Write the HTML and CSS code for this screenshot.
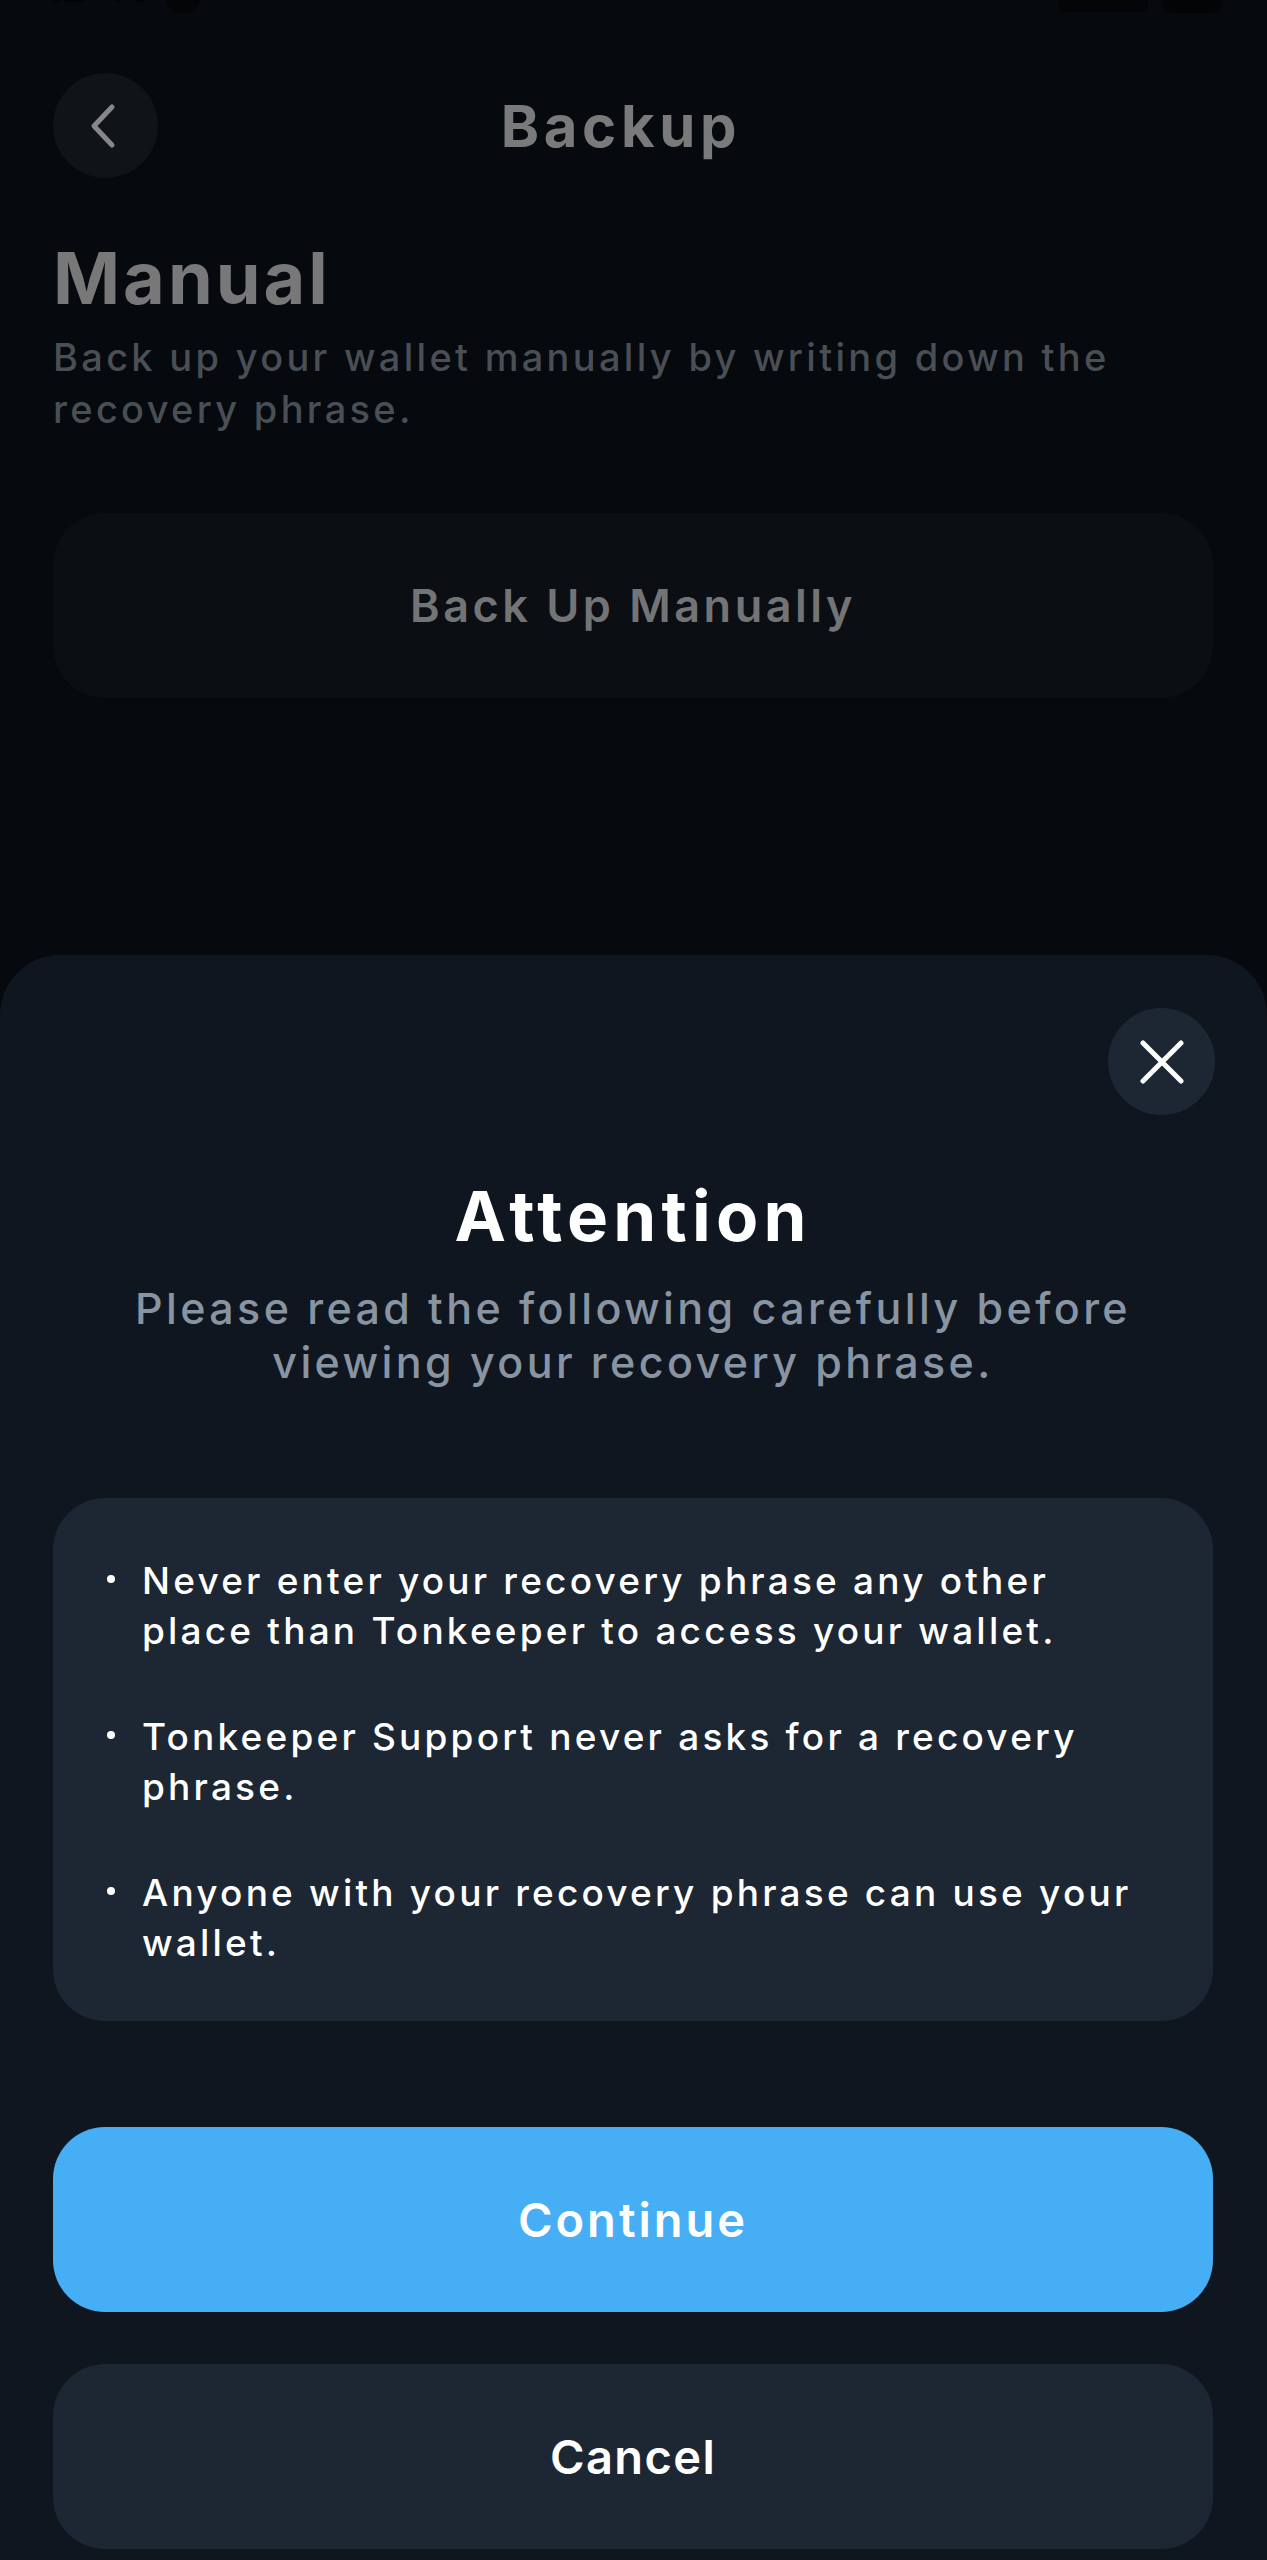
FILE: index.html
```html
<!DOCTYPE html>
<html lang="en">
<head>
<meta charset="utf-8">
<title>Backup</title>
<link rel="stylesheet" href="styles.css">
</head>
<body>
<div class="screen">
  <div class="status">
    <div class="status-left"><span class="time">12:46</span><span class="status-dot"></span></div>
    <div class="status-right"><span class="sig"></span><span class="bat"></span></div>
  </div>

  <div class="page">
    <div class="header">
      <div class="round-btn back">
        <svg width="30" height="48" viewBox="0 0 30 48" fill="none"><path d="M24 5 L6 24 L24 43" stroke="#85878a" stroke-width="5" stroke-linecap="round" stroke-linejoin="round"/></svg>
      </div>
      <div class="header-title">Backup</div>
      <div class="header-spacer"></div>
    </div>

    <h1 class="section-title">Manual</h1>
    <p class="section-desc">Back up your wallet manually by writing down the<br>recovery phrase.</p>

    <div class="btn btn-dim">Back Up Manually</div>
  </div>

  <div class="sheet">
    <div class="sheet-top">
      <div class="round-btn close">
        <svg width="44" height="44" viewBox="0 0 44 44" fill="none"><path d="M3 3 L41 41 M41 3 L3 41" stroke="#ffffff" stroke-width="5" stroke-linecap="round"/></svg>
      </div>
    </div>
    <h2 class="sheet-title">Attention</h2>
    <p class="sheet-sub">Please read the following carefully before<br>viewing your recovery phrase.</p>

    <ul class="notes">
      <li>Never enter your recovery phrase any other<br>place than Tonkeeper to access your wallet.</li>
      <li>Tonkeeper Support never asks for a recovery<br>phrase.</li>
      <li>Anyone with your recovery phrase can use your<br>wallet.</li>
    </ul>

    <div class="btn btn-primary">Continue</div>
    <div class="btn btn-secondary">Cancel</div>
  </div>
</div>
</body>
</html>
```

FILE: styles.css
```css
* { box-sizing: border-box; }
html, body { margin: 0; padding: 0; }
body {
  background: #06090d;
  font-family: Inter, "Noto Sans", "DejaVu Sans", sans-serif;
  width: 1267px;
  height: 2560px;
  overflow: hidden;
}
.screen { display: flex; flex-direction: column; height: 2560px; }

/* status bar (cut off at the top) */
.status {
  height: 16px;
  overflow: hidden;
  display: flex;
  justify-content: space-between;
  align-items: flex-end;
  padding: 0 45px 0 45px;
}
.status-left, .status-right { display: flex; align-items: flex-end; gap: 14px; }
.time { font-size: 40px; line-height: 40px; font-weight: 600; color: #030405; margin-bottom: 8px; }
.status-dot { width: 34px; height: 30px; border-radius: 50%; background: #040506; margin-bottom: 2px; }
.sig { width: 90px; height: 30px; background: #040506; border-radius: 6px; margin-bottom: 4px; }
.bat { width: 60px; height: 30px; background: #030405; border-radius: 10px; margin-bottom: 3px; }

.page { padding: 0 54px 0 53px; }

.header {
  margin-top: 57px;
  height: 105px;
  display: grid;
  grid-template-columns: 105px 1fr 105px;
  align-items: center;
}
.round-btn {
  width: 105px; height: 105px; border-radius: 50%;
  display: flex; align-items: center; justify-content: center;
}
.back { background: #101317; }
.back svg { margin-left: -6px; }
.header-title {
  text-align: center;
  font-size: 58px; line-height: 70px; font-weight: 700;
  letter-spacing: 4.7px;
  color: #7a7a7b;
  padding-right: 24px;
}

.section-title {
  margin: 56px 0 0;
  font-size: 72px; line-height: 88px; font-weight: 700;
  letter-spacing: 3px;
  color: #787879;
}
.section-desc {
  margin: 9px 0 0;
  font-size: 38px; line-height: 52px; font-weight: 500;
  letter-spacing: 3.3px;
  color: #4a4f56;
}

.btn {
  height: 185px; border-radius: 52px;
  display: flex; align-items: center; justify-content: center;
  font-size: 45px; font-weight: 600; letter-spacing: 3px;
}
.btn-dim { margin-top: 78px; background: #0b0e13; color: #737476; letter-spacing: 3.5px; }

.sheet {
  margin-top: 257px;
  flex: 1;
  background: #10161f;
  border-radius: 60px 60px 0 0;
  padding: 53px 54px 0 53px;
  display: flex; flex-direction: column;
}
.sheet-top { display: flex; justify-content: flex-end; margin-right: -2px; }
.close { background: #1d2633; width: 107px; height: 107px; }
.sheet-title {
  margin: 59px 0 0;
  text-align: center;
  font-size: 69px; line-height: 84px; font-weight: 700;
  letter-spacing: 5.2px;
  color: #ffffff;
}
.sheet-sub {
  margin: 23px 0 0;
  text-align: center;
  font-size: 43px; line-height: 54px; font-weight: 500;
  letter-spacing: 3.4px;
  color: #8994a3;
}
.notes {
  list-style: none;
  margin: 109px 0 0;
  padding: 58px 30px 53px 89px;
  background: #1d2633;
  border-radius: 52px;
  display: flex; flex-direction: column; gap: 56px;
}
.notes li {
  position: relative;
  font-size: 37px; line-height: 50px; font-weight: 500;
  letter-spacing: 3.2px;
  color: #ffffff;
}
.notes li::before {
  content: "";
  position: absolute;
  left: -35px; top: 19px;
  width: 8px; height: 8px; border-radius: 50%;
  background: #ffffff;
}
.btn-primary { margin-top: 106px; background: #45aef5; color: #ffffff; font-size: 47px; }
.btn-secondary { margin-top: 52px; background: #1d2633; color: #ffffff; font-size: 47px; letter-spacing: 1.4px; }
```
